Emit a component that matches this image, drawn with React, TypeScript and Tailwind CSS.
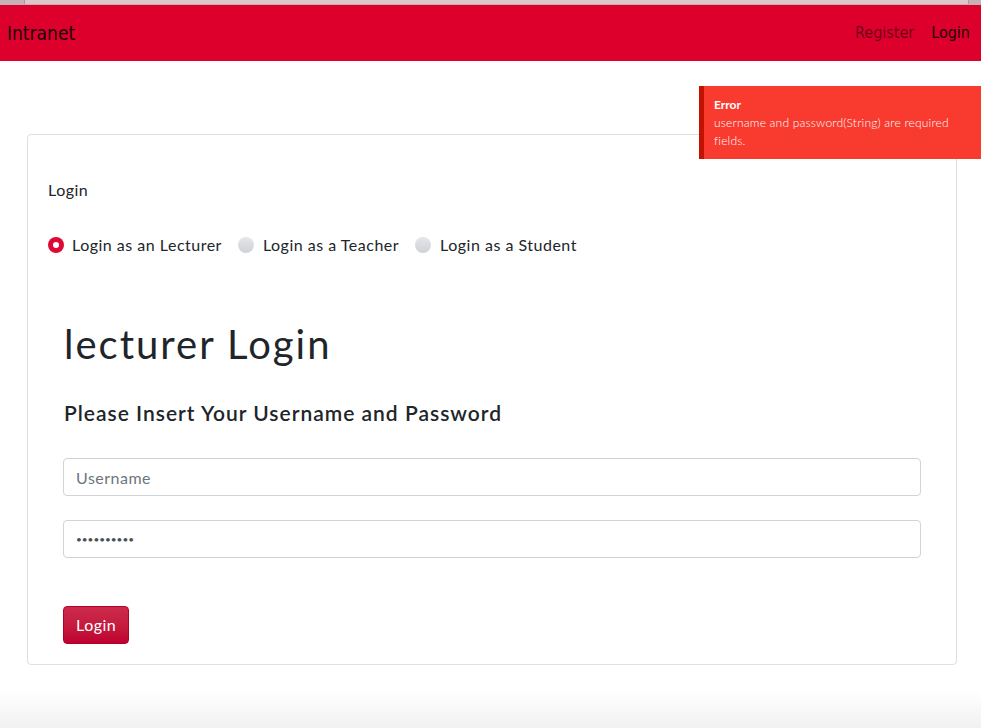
import React, { useState } from 'react';

const roles = [
  { id: 'lecturer', label: 'Login as an Lecturer' },
  { id: 'teacher', label: 'Login as a Teacher' },
  { id: 'student', label: 'Login as a Student' },
];

const App: React.FC = () => {
  const [role, setRole] = useState('lecturer');
  const [username, setUsername] = useState('');
  const [password, setPassword] = useState('1234567890');

  return (
    <div className="relative min-h-[728px] flex flex-col bg-white" style={{ fontFamily: 'Lato, "Noto Sans", sans-serif' }}>
      {/* browser strip */}
      <div className="h-[5px] flex bg-[#dcc7cb] border-b border-[#c9a9b0]">
        <div className="w-[25px] bg-[#c3b3b7] border-r border-[#a89a9e]" />
        <div className="flex-1" />
        <div className="w-[13px] bg-[#c3b3b7] border-l border-[#a89a9e]" />
      </div>

      {/* navbar */}
      <nav className="h-[56px] bg-[#dd002d] flex items-center justify-between pl-[7px] pr-[11px]" style={{ fontFamily: '"DejaVu Sans Condensed", "DejaVu Sans", sans-serif' }}>
        <span className="text-[19px] text-black/90">Intranet</span>
        <div className="flex items-center gap-[17px] text-[16px]">
          <a className="text-black/50">Register</a>
          <a className="text-black/90">Login</a>
        </div>
      </nav>

      {/* error toast */}
      <div className="absolute top-[86px] right-0 w-[282px] h-[73px] bg-[#f83a2f] border-l-[5px] border-[#c41200] pl-[10px] pr-3 pt-[10px] text-white text-[12px] leading-[18px]">
        <div className="font-bold">Error</div>
        <div className="font-light tracking-[0.2px]">username and password(String) are required fields.</div>
      </div>

      <main className="pl-[27px] pr-[24px] pt-[73px] text-[#212529]">
        <div className="border border-[#dfdfdf] rounded-[4px] pl-[20px] pr-[35px] pt-[43px] pb-[20px]">
          <div className="text-[16px] leading-[24px] tracking-[0.5px]">Login</div>

          <div className="flex items-center mt-[31px] text-[16px] leading-[24px] tracking-[0.5px]">
            {roles.map((r) => (
              <label key={r.id} className="flex items-center mr-[16px] cursor-pointer" onClick={() => setRole(r.id)}>
                {role === r.id ? (
                  <span className="w-[16px] h-[16px] rounded-full bg-[#dc0a35] flex items-center justify-center mr-[8px]">
                    <span className="w-[6px] h-[6px] rounded-full bg-white" />
                  </span>
                ) : (
                  <span className="w-[16px] h-[16px] rounded-full bg-gradient-to-b from-[#e4e6e9] to-[#cfd2d6] mr-[9px]" />
                )}
                <span>{r.label}</span>
              </label>
            ))}
          </div>

          <div className="pl-[15px] mt-[63px]">
            <h1 className="text-[40px] leading-[48px] font-normal tracking-[2px] pl-px">lecturer Login</h1>
            <h4 className="text-[21px] leading-[26px] font-semibold mt-[32px] tracking-[1px] pl-px">Please Insert Your Username and Password</h4>

            <input
              className="block w-full h-[38px] mt-[32px] border border-[#ced4da] rounded-[4px] px-[12px] text-[16px] tracking-[0.5px] text-[#495057] placeholder:text-[#6c757d] outline-none"
              placeholder="Username"
              value={username}
              onChange={(e) => setUsername(e.target.value)}
            />
            <input
              type="password"
              className="block w-full h-[38px] mt-[24px] border border-[#ced4da] rounded-[4px] px-[12px] text-[10px] text-[#495057] outline-none"
              value={password}
              onChange={(e) => setPassword(e.target.value)}
            />

            <button className="mt-[48px] h-[38px] px-[12px] rounded-[4px] border border-[#b3002a] bg-gradient-to-b from-[#cc2a4c] to-[#bf0030] text-white text-[16px] tracking-[0.5px]">
              Login
            </button>
          </div>
        </div>
      </main>

      <div className="flex-1 bg-gradient-to-b from-white from-40% to-[#f1f1f1]" />
    </div>
  );
};

export default App;
